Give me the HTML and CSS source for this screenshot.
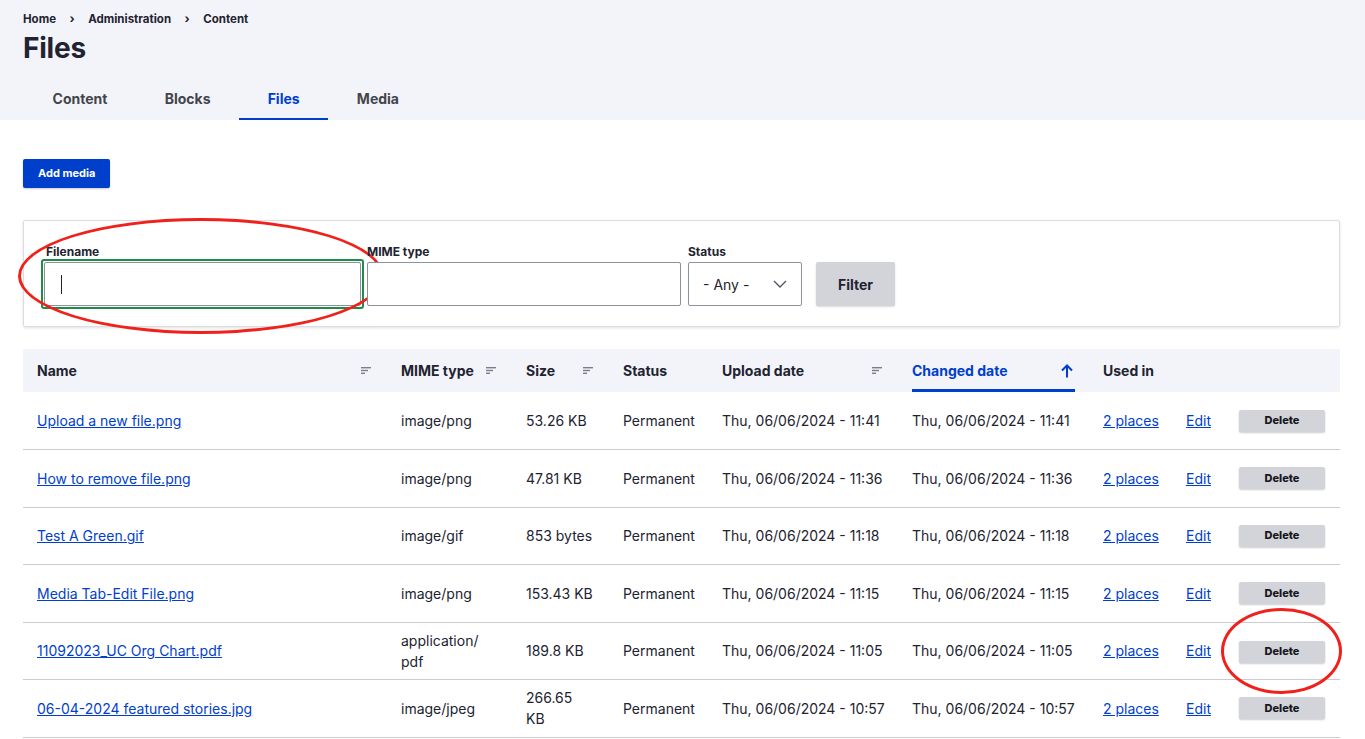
FILE: index.html
```html
<!DOCTYPE html>
<html lang="en">
<head>
<meta charset="utf-8">
<title>Files</title>
<link rel="stylesheet" href="styles.css">
</head>
<body>
<header class="page-header">
  <nav class="breadcrumb">
    <a href="#">Home</a><span class="sep">›</span><a href="#">Administration</a><span class="sep">›</span><a href="#">Content</a>
  </nav>
  <h1 class="title">Files</h1>
  <ul class="tabs">
    <li class="tab"><a href="#">Content</a></li>
    <li class="tab"><a href="#">Blocks</a></li>
    <li class="tab active"><a href="#">Files</a></li>
    <li class="tab"><a href="#">Media</a></li>
  </ul>
</header>

<main class="content">
  <div class="actions"><a class="btn-primary" href="#">Add media</a></div>

  <form class="filters">
    <div class="field field-filename">
      <label>Filename</label>
      <div class="focus-ring"><input class="text-input" type="text"><span class="caret"></span></div>
      <span class="annot annot-filename"></span>
    </div>
    <div class="field field-mime">
      <label>MIME type</label>
      <input class="text-input" type="text">
    </div>
    <div class="field field-status">
      <label>Status</label>
      <div class="select">
        <span>- Any -</span>
        <svg width="14" height="8" viewBox="0 0 14 8"><path d="M1 1l6 6 6-6" fill="none" stroke="#545560" stroke-width="1.4"/></svg>
      </div>
    </div>
    <div class="field field-submit">
      <button type="button" class="btn-filter">Filter</button>
    </div>
  </form>

  <table class="files">
    <colgroup>
      <col style="width:364px"><col style="width:125px"><col style="width:97px"><col style="width:99px"><col style="width:190px"><col style="width:191px"><col style="width:83px"><col style="width:168px">
    </colgroup>
    <thead>
      <tr>
        <th><div class="th-in">Name<svg class="sort" width="10" height="7" viewBox="0 0 10 7"><rect x="0" y="0" width="10" height="1.4"/><rect x="0" y="2.8" width="7" height="1.4"/><rect x="0" y="5.6" width="4" height="1.4"/></svg></div></th>
        <th><div class="th-in">MIME type<svg class="sort" width="10" height="7" viewBox="0 0 10 7"><rect x="0" y="0" width="10" height="1.4"/><rect x="0" y="2.8" width="7" height="1.4"/><rect x="0" y="5.6" width="4" height="1.4"/></svg></div></th>
        <th><div class="th-in">Size<svg class="sort" width="10" height="7" viewBox="0 0 10 7"><rect x="0" y="0" width="10" height="1.4"/><rect x="0" y="2.8" width="7" height="1.4"/><rect x="0" y="5.6" width="4" height="1.4"/></svg></div></th>
        <th><div class="th-in">Status</div></th>
        <th><div class="th-in">Upload date<svg class="sort" width="10" height="7" viewBox="0 0 10 7"><rect x="0" y="0" width="10" height="1.4"/><rect x="0" y="2.8" width="7" height="1.4"/><rect x="0" y="5.6" width="4" height="1.4"/></svg></div></th>
        <th class="sorted"><div class="th-in">Changed date<svg class="arrow" width="12" height="14" viewBox="0 0 12 14"><path d="M6 13.5V2M1 6.5l5-5 5 5" fill="none" stroke="#003ecc" stroke-width="2"/></svg></div></th>
        <th><div class="th-in">Used in</div></th>
        <th></th>
      </tr>
    </thead>
    <tbody>
      <tr>
        <td><a href="#">Upload a new file.png</a></td><td>image/png</td><td>53.26 KB</td><td>Permanent</td><td class="nw">Thu, 06/06/2024 - 11:41</td><td class="nw">Thu, 06/06/2024 - 11:41</td><td class="nw"><a href="#">2 places</a></td>
        <td><div class="ops"><a href="#">Edit</a><button type="button" class="btn-delete">Delete</button></div></td>
      </tr>
      <tr>
        <td><a href="#">How to remove file.png</a></td><td>image/png</td><td>47.81 KB</td><td>Permanent</td><td class="nw">Thu, 06/06/2024 - 11:36</td><td class="nw">Thu, 06/06/2024 - 11:36</td><td class="nw"><a href="#">2 places</a></td>
        <td><div class="ops"><a href="#">Edit</a><button type="button" class="btn-delete">Delete</button></div></td>
      </tr>
      <tr>
        <td><a href="#">Test A Green.gif</a></td><td>image/gif</td><td>853 bytes</td><td>Permanent</td><td class="nw">Thu, 06/06/2024 - 11:18</td><td class="nw">Thu, 06/06/2024 - 11:18</td><td class="nw"><a href="#">2 places</a></td>
        <td><div class="ops"><a href="#">Edit</a><button type="button" class="btn-delete">Delete</button></div></td>
      </tr>
      <tr>
        <td><a href="#">Media Tab-Edit File.png</a></td><td>image/png</td><td>153.43 KB</td><td>Permanent</td><td class="nw">Thu, 06/06/2024 - 11:15</td><td class="nw">Thu, 06/06/2024 - 11:15</td><td class="nw"><a href="#">2 places</a></td>
        <td><div class="ops"><a href="#">Edit</a><button type="button" class="btn-delete">Delete</button></div></td>
      </tr>
      <tr>
        <td><a href="#">11092023_UC Org Chart.pdf</a></td><td>application/<br>pdf</td><td>189.8 KB</td><td>Permanent</td><td class="nw">Thu, 06/06/2024 - 11:05</td><td class="nw">Thu, 06/06/2024 - 11:05</td><td class="nw"><a href="#">2 places</a></td>
        <td><div class="ops"><a href="#">Edit</a><span class="annot-wrap"><button type="button" class="btn-delete">Delete</button><span class="annot annot-delete"></span></span></div></td>
      </tr>
      <tr>
        <td><a href="#">06-04-2024 featured stories.jpg</a></td><td>image/jpeg</td><td>266.65<br>KB</td><td>Permanent</td><td class="nw">Thu, 06/06/2024 - 10:57</td><td class="nw">Thu, 06/06/2024 - 10:57</td><td class="nw"><a href="#">2 places</a></td>
        <td><div class="ops"><a href="#">Edit</a><button type="button" class="btn-delete">Delete</button></div></td>
      </tr>
    </tbody>
  </table>
</main>
</body>
</html>
```

FILE: styles.css
```css
* { box-sizing: border-box; }
html, body { margin: 0; padding: 0; }
body {
  font-family: Inter, "Liberation Sans", Arial, sans-serif;
  color: #222330;
  background: #fff;
  font-size: 14px;
  overflow: hidden;
}
a { color: #003ecc; }

.page-header {
  background: #f3f4f9;
  padding: 12px 23px 0;
  height: 120px;
}
.breadcrumb {
  font-size: 11.5px;
  font-weight: 700;
  line-height: 14px;
  display: flex;
  align-items: center;
}
.breadcrumb a { color: #222330; text-decoration: none; }
.breadcrumb .sep { margin: 0 13.5px; font-size: 12px; }
.title {
  margin: 5px 0 0;
  font-size: 28px;
  line-height: 34px;
  font-weight: 700;
  letter-spacing: -0.2px;
}
.tabs {
  list-style: none;
  margin: 14px 0 0 1px;
  padding: 0;
  display: flex;
}
.tab a {
  display: block;
  padding: 0 28.6px;
  height: 41px;
  line-height: 40px;
  font-size: 14px;
  font-weight: 700;
  color: #43454d;
  text-decoration: none;
  border-bottom: 2px solid transparent;
}
.tab.active a { color: #003ecc; border-bottom-color: #003ecc; }

.content { padding: 39px 25px 0 23px; }
.actions { display: flex; }
.btn-primary {
  display: inline-block;
  background: #003ecc;
  color: #fff;
  text-decoration: none;
  font-size: 11px;
  font-weight: 700;
  height: 29px;
  line-height: 29px;
  padding: 0 15px;
  border-radius: 2px;
  box-shadow: 0 1px 2px rgba(0,0,0,0.2);
}

.filters {
  margin-top: 32px;
  border: 1px solid #dcdce3;
  box-shadow: 0 1px 3px rgba(0,0,0,0.12);
  border-radius: 2px;
  height: 107px;
  padding: 24px 0 0 17px;
  display: flex;
  align-items: flex-start;
}
.field { display: flex; flex-direction: column; position: relative; }
.field label {
  font-size: 12px;
  font-weight: 700;
  line-height: 14px;
  margin: 0 0 3px 0;
}
.field-filename { width: 323px; }
.field-filename label { margin-left: 5px; }
.focus-ring {
  position: relative;
  border: 2px solid #228b4a;
  border-radius: 3px;
  margin-top: -3px;
  padding: 1px;
}
.focus-ring .text-input { width: 100%; height: 44px; display: block; }
.caret {
  position: absolute;
  left: 18px;
  top: 14px;
  width: 1px;
  height: 19px;
  background: #222330;
}
.text-input {
  height: 44px;
  border: 1px solid #8e929c;
  border-radius: 2px;
  font: inherit;
  background: #fff;
  outline: none;
}
.field-mime { width: 314px; margin-left: 3px; }
.field-mime .text-input { width: 314px; }
.field-status { margin-left: 7px; }
.select {
  width: 114px;
  height: 44px;
  border: 1px solid #8e929c;
  border-radius: 2px;
  display: flex;
  align-items: center;
  justify-content: space-between;
  padding: 0 14px 0 14px;
  font-size: 14px;
  color: #222330;
}
.field-submit { margin-left: 14px; padding-top: 17px; }
.btn-filter {
  width: 79px;
  height: 44px;
  background: #d3d4d9;
  border: 0;
  border-radius: 2px;
  font: inherit;
  font-size: 14px;
  font-weight: 700;
  color: #222330;
  box-shadow: 0 1px 2px rgba(0,0,0,0.15);
}

.annot {
  position: absolute;
  border: 3px solid #f0201a;
  border-radius: 50%;
  pointer-events: none;
}
.annot-filename {
  left: -23px;
  top: -27px;
  width: 366px;
  height: 116px;
}
.annot-wrap { position: relative; display: inline-block; }
.annot-delete {
  left: -18px;
  top: -31px;
  width: 121px;
  height: 86px;
}

.files {
  margin-top: 22px;
  width: 1317px;
  border-collapse: collapse;
  table-layout: fixed;
}
.files thead tr { background: #f3f4f9; height: 43px; }
.files th {
  text-align: left;
  padding: 0 14px;
  font-size: 14px;
  font-weight: 700;
  vertical-align: top;
}
.th-in {
  height: 43px;
  display: flex;
  align-items: center;
  justify-content: space-between;
  border-bottom: 3px solid transparent;
  padding-top: 3px;
}
.sort { fill: #7b7e8a; margin-right: 2px; }
.files th.sorted { color: #003ecc; }
.files th.sorted .th-in { border-bottom-color: #003ecc; padding-right: 2px; }
.files td {
  height: 57.5px;
  padding: 0 14px;
  border-bottom: 1px solid #cacbd0;
  font-size: 14px;
  line-height: 21px;
  vertical-align: middle;
}
.files td.nw { white-space: nowrap; }
.ops { display: flex; align-items: center; gap: 28px; }
.btn-delete {
  width: 86px;
  height: 22px;
  background: #d3d4d9;
  border: 0;
  border-radius: 2px;
  font: inherit;
  font-size: 11px;
  font-weight: 800;
  color: #17181f;
  box-shadow: 0 1px 2px rgba(0,0,0,0.2);
  padding: 0;
}
```
